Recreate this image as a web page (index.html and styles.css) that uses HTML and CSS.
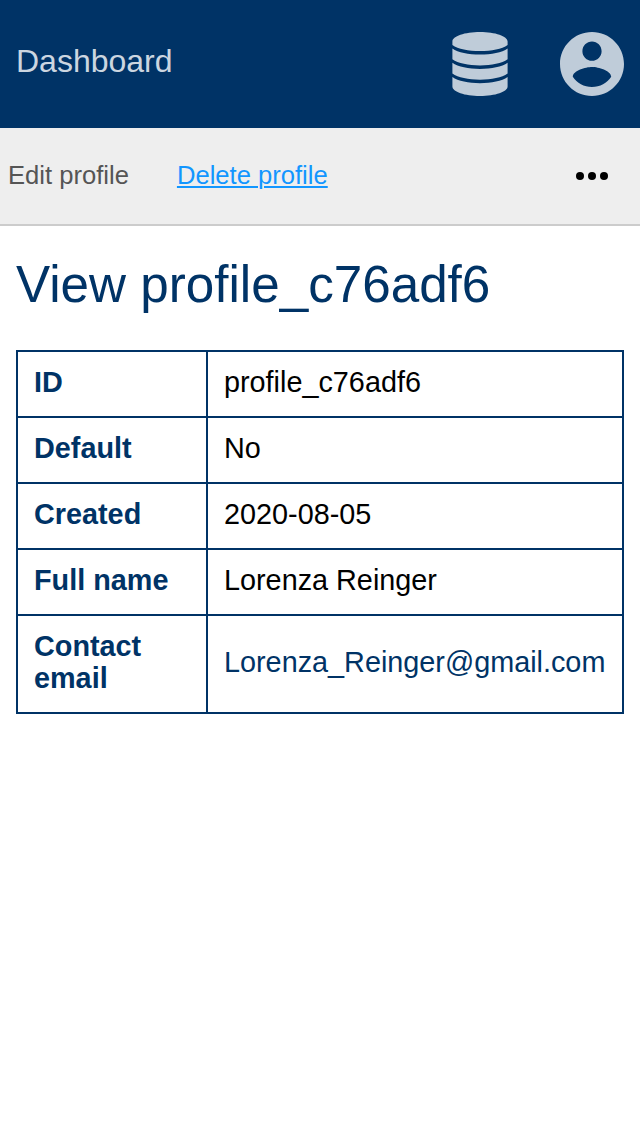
FILE: index.html
```html
<!DOCTYPE html>
<html lang="en">
<head>
<meta charset="utf-8">
<title>View profile</title>
<link rel="stylesheet" href="styles.css">
</head>
<body>
<header class="header">
  <a class="brand">Dashboard</a>
  <nav class="header-icons">
    <svg class="icon-db" viewBox="0 0 56 64" aria-label="Data"><path d="M.4 9.500C.4 4.250 12.750 0 28 0s27.600 4.250 27.600 9.500v3.400C50 16.900 39.500 19 28 19S6 16.900.4 12.900zM.4 16.400C6 20.400 16.500 22.500 28 22.500S50 20.400 55.600 16.400v10.900C50 31.300 39.500 33.400 28 33.400S6 31.300.4 27.300zM.4 30.800C6 34.800 16.500 36.900 28 36.900s22-2.100 27.600-6.100v10.800C50 45.600 39.500 47.700 28 47.700S6 45.600.4 41.600zM.4 45.100C6 49.100 16.500 51.200 28 51.200s22-2.100 27.600-6.100v9.400C55.600 59.750 43.250 64 28 64S.4 59.750.4 54.500z"/></svg>
    <svg class="icon-user" viewBox="2 2 20 20" aria-label="Account"><path d="M12 2C6.480 2 2 6.480 2 12s4.480 10 10 10 10-4.480 10-10S17.520 2 12 2zm0 3c1.660 0 3 1.340 3 3s-1.340 3-3 3-3-1.340-3-3 1.340-3 3-3zm0 14.200c-2.500 0-4.710-1.280-6-3.220.03-1.990 4-3.080 6-3.080 1.990 0 5.970 1.090 6 3.080-1.290 1.940-3.500 3.220-6 3.220z"/></svg>
  </nav>
</header>
<nav class="actions">
  <a class="action">Edit profile</a>
  <a class="action action-active">Delete profile</a>
  <svg class="more" viewBox="0 0 32 8" aria-label="More"><circle cx="4" cy="4" r="4"/><circle cx="16" cy="4" r="4"/><circle cx="28" cy="4" r="4"/></svg>
</nav>
<main class="content">
  <h1 class="title">View profile_c76adf6</h1>
  <table class="details">
    <tr><th>ID</th><td>profile_c76adf6</td></tr>
    <tr><th>Default</th><td>No</td></tr>
    <tr><th>Created</th><td>2020-08-05</td></tr>
    <tr><th>Full name</th><td>Lorenza Reinger</td></tr>
    <tr><th>Contact email</th><td><a class="email">Lorenza_Reinger@gmail.com</a></td></tr>
  </table>
</main>
</body>
</html>
```
FILE: styles.css
```css
* { box-sizing: border-box; }
body { margin: 0; background: #fff; color: #000; font-family: "Liberation Sans", Arial, sans-serif; }
.header { height: 128px; padding: 0 16px; display: flex; align-items: center; justify-content: space-between; background: #036; }
.brand { font-size: 32px; line-height: 36px; padding-bottom: 7px; color: #ccd6e0; }
.header-icons { display: flex; gap: 52px; fill: #bfccd9; }
.icon-db { width: 56px; height: 64px; }
.icon-user { width: 64px; height: 64px; }
.actions { height: 98px; padding-left: 8px; padding-right: 32px; display: flex; align-items: center; gap: 48px; background: #eee; border-bottom: 2px solid #ccc; font-size: 25.6px; line-height: 30px; color: #555; }
.action { padding-bottom: 2px; }
.action-active { color: #1296ff; text-decoration: underline; text-decoration-thickness: 2px; text-underline-offset: 2px; }
.more { width: 32px; height: 8px; margin-left: auto; }
.content { padding: 27px 16px; }
.title { margin: 0 0 33px; font-size: 51.2px; line-height: 64px; font-weight: 400; color: #036; }
.details { width: 608px; border-collapse: collapse; font-size: 28.8px; line-height: 32px; text-align: left; }
.details th, .details td { border: 2px solid #036; padding: 14px 16px 18px; }
.details th { width: 190px; color: #036; }
.email { color: #036; }
```
